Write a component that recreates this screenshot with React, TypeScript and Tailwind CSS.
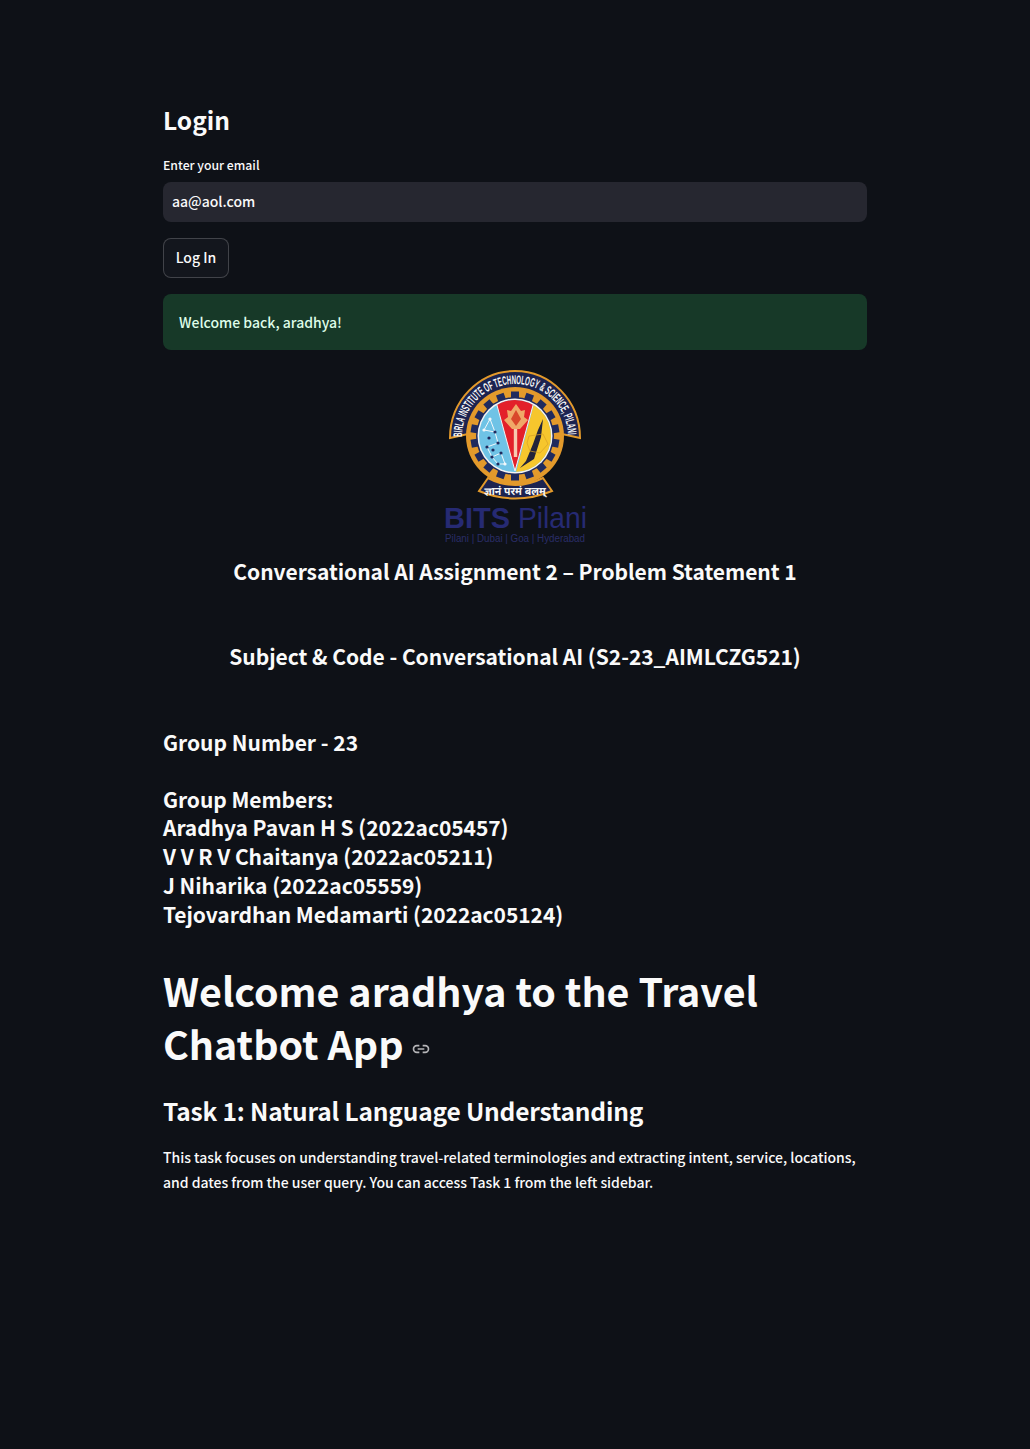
const font = { fontFamily: '"Noto Sans CJK SC", "Noto Sans", sans-serif' };

function BitsLogo() {
  const cx = 85;
  const cy = 76;
  const teeth = Array.from({ length: 18 }, (_, i) => (i * 360) / 18);
  return (
    <svg width="170" height="190" viewBox="0 0 170 190" className="block">
      <defs>
        <path id="bannerArc" d="M 32 77 A 53 53 0 0 1 138 77" />
        <clipPath id="innerDisc">
          <circle cx={cx} cy={cy} r="36" />
        </clipPath>
      </defs>
      {/* top banner */}
      <path d="M 20 78 A 65 67 0 0 1 150 78 L 132 74 L 38 74 Z" fill="#1c2350" stroke="#e39a2b" strokeWidth="2" />
      <text fill="#f7f7f7" fontSize="12.5" fontWeight="700" fontFamily='"Liberation Sans", sans-serif' textLength="164" lengthAdjust="spacingAndGlyphs">
        <textPath href="#bannerArc">BIRLA INSTITUTE OF TECHNOLOGY &amp; SCIENCE, PILANI</textPath>
      </text>
      {/* gear */}
      <circle cx={cx} cy={cy} r="49" fill="#e39a2b" />
      {teeth.map((a) => (
        <rect key={a} x={cx - 4} y={cy - 44.5} width="8" height="8" fill="#1f2a5e" transform={`rotate(${a} ${cx} ${cy})`} />
      ))}
      <circle cx={cx} cy={cy} r="39" fill="#1f2a5e" />
      <circle cx={cx} cy={cy} r="37.5" fill="#f4f4f4" />
      {/* shield sections */}
      <g clipPath="url(#innerDisc)">
        <rect x="45" y="36" width="80" height="80" fill="#6fc3e6" />
        <path d="M 105 40 L 125 40 L 125 116 L 85 116 Z" fill="#f6c62d" />
        <path d="M 65 38 L 105 38 L 85 111 Z" fill="#e3202a" stroke="#f4f4f4" strokeWidth="1" />
      </g>
      {/* lotus */}
      <rect x="83.8" y="66" width="3.4" height="31" fill="#f7c9b0" />
      <path d="M 86 44 L 91 51 L 95 50 L 94 57 L 98 60 L 90 69 L 82 69 L 74 60 L 78 57 L 77 50 L 81 51 Z" fill="#f0a868" />
      <path d="M 86 50 L 91 59 L 86 66 L 81 59 Z" fill="#d9482b" />
      {/* constellation */}
      <g stroke="#f2f8fb" strokeWidth="1" fill="none">
        <path d="M 60 59 L 54 70 L 65 72 L 60 59 M 65 72 L 68 83 L 57 87 L 62 97 L 68 104 L 75 104 L 71 93 L 62 97" />
      </g>
      <g fill="#1f2a5e">
        {[[65, 72], [68, 83], [57, 87], [62, 97], [71, 93], [68, 104], [59, 78], [63, 90]].map(([x, y]) => (
          <circle key={`${x}-${y}`} cx={x} cy={y} r="1.6" />
        ))}
      </g>
      <g fill="#f2f8fb">
        {[[60, 59], [54, 70], [75, 104]].map(([x, y]) => (
          <circle key={`${x}-${y}`} cx={x} cy={y} r="1.6" />
        ))}
      </g>
      {/* rocket */}
      <path d="M 113 59 L 111 77 L 104 99 L 90 108 L 96 101 L 103 84 L 108 70 Z" fill="#22233a" />
      <path d="M 99 76 L 113 74 L 118 84 L 110 93 L 100 91 L 97 83 Z" fill="none" stroke="#d9a024" strokeWidth="0.7" />
      {/* bottom ribbon */}
      <path d="M 49 131 L 58 118 Q 85 132 113 118 L 122 131 Q 85 146 49 131 Z" fill="#1c2350" stroke="#e39a2b" strokeWidth="2" />
      <text x="85" y="135" textAnchor="middle" fill="#f5f5f5" fontSize="10.5" fontWeight="700" fontFamily='"Noto Sans Devanagari", "Noto Sans", sans-serif'>
        ज्ञानं परमं बलम्
      </text>
      {/* wordmark */}
      <text x="14" y="168" fill="#262a73" fontSize="29" fontWeight="700" fontFamily='"Liberation Sans", sans-serif' textLength="66" lengthAdjust="spacingAndGlyphs">BITS</text>
      <text x="88" y="168" fill="#262a73" fontSize="29" fontFamily='"Liberation Sans", sans-serif' textLength="69" lengthAdjust="spacingAndGlyphs">Pilani</text>
      <text x="15" y="182" fill="#2a2d68" fontSize="10" fontFamily='"Liberation Sans", sans-serif' textLength="140" lengthAdjust="spacingAndGlyphs">Pilani | Dubai | Goa | Hyderabad</text>
    </svg>
  );
}

function LinkIcon() {
  return (
    <svg width="20" height="20" viewBox="0 0 24 24" fill="none" stroke="#b5b5b8" strokeWidth="2" className="ml-[7px] shrink-0 self-end mb-[10px]">
      <path d="M10 8H7a4 4 0 0 0 0 8h3M14 8h3a4 4 0 0 1 0 8h-3M8 12h8" />
    </svg>
  );
}

export default function App() {
  return (
    <div className="min-h-screen bg-[#0e1117] font-medium text-[#fafafa]" style={font}>
      <div className="mx-auto w-[704px] pt-[101px]">
        <h2 className="text-[24.5px] font-semibold leading-[38px]">Login</h2>
        <label className="mt-[19px] block text-[12.25px] leading-[14px]">Enter your email</label>
        <div className="mt-[10px] flex h-10 items-center rounded-lg bg-[#262730] px-[9px] pb-[2px] text-[14px]">aa@aol.com</div>
        <button className="mt-4 flex h-10 w-[66px] items-center justify-center rounded-lg border border-[#fafafa33] bg-[#13161d] pb-[2px] text-[14px]">
          Log In
        </button>
        <div className="mt-4 flex h-14 items-center rounded-lg bg-[#173928] px-4 text-[14px] text-[#dffde9]">
          Welcome back, aradhya!
        </div>
        <div className="mt-[10px] flex justify-center">
          <BitsLogo />
        </div>
        <h3 className="mt-[5px] text-center text-[21px] font-semibold leading-[32px] tracking-[-0.04px]">
          Conversational AI Assignment 2 – Problem Statement 1
        </h3>
        <h3 className="mt-[53px] text-center text-[21px] font-semibold leading-[32px] tracking-[-0.04px]">
          Subject &amp; Code - Conversational AI (S2-23_AIMLCZG521)
        </h3>
        <h3 className="mt-[54px] text-[21px] font-semibold leading-[32px]">Group Number - 23</h3>
        <div className="mt-[27px] text-[21px] font-semibold leading-[29px] tracking-[-0.06px]">
          <p>Group Members:</p>
          <p className="-mt-px">Aradhya Pavan H S (2022ac05457)</p>
          <p>V V R V Chaitanya (2022ac05211)</p>
          <p>J Niharika (2022ac05559)</p>
          <p>Tejovardhan Medamarti (2022ac05124)</p>
        </div>
        <h1 className="mt-[34px] text-[39.4px] font-bold leading-[53px]">
          Welcome aradhya to the Travel
          <span className="flex items-center">
            Chatbot App
            <LinkIcon />
          </span>
        </h1>
        <h2 className="mt-[23px] text-[24.5px] font-semibold leading-[38px] tracking-[-0.18px]">Task 1: Natural Language Understanding</h2>
        <p className="mt-[15px] text-[14px] leading-[25px] tracking-[-0.02px]">
          This task focuses on understanding travel-related terminologies and extracting intent, service, locations, and dates from the user query. You can access Task 1 from the left sidebar.
        </p>
      </div>
    </div>
  );
}
